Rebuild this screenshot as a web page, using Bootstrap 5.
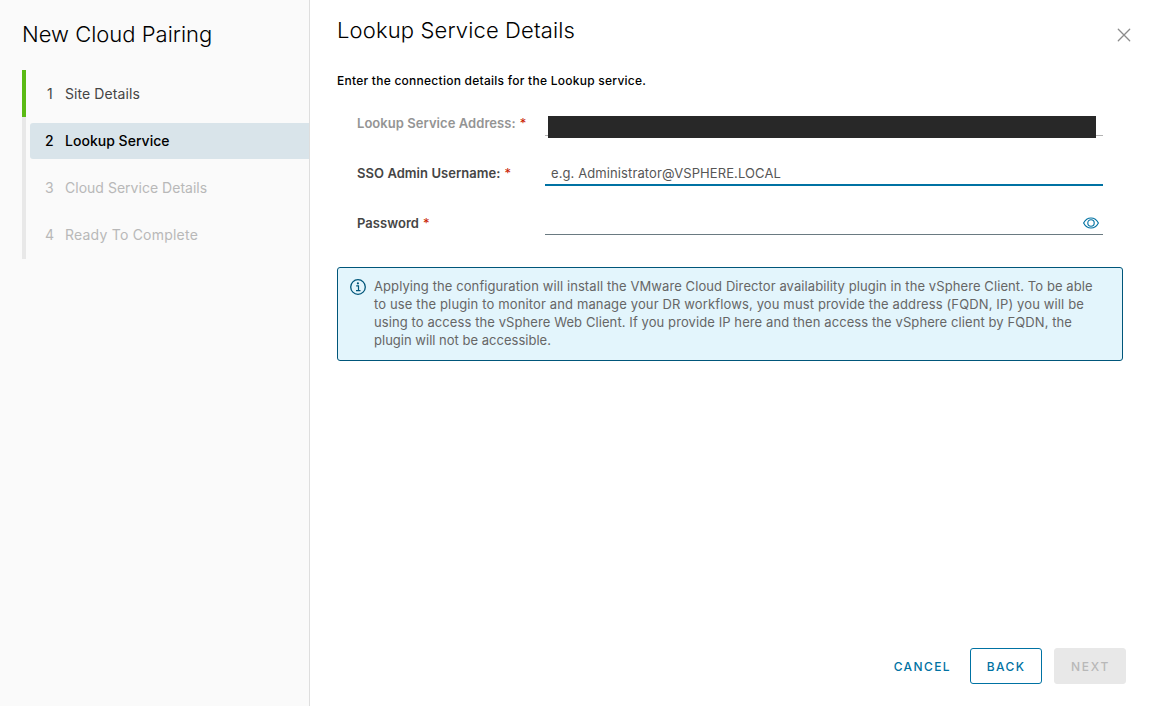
<!DOCTYPE html>
<html lang="en">
<head>
<meta charset="utf-8">
<meta name="viewport" content="width=device-width, initial-scale=1">
<title>New Cloud Pairing</title>
<link href="https://cdn.jsdelivr.net/npm/bootstrap@5.3.0/dist/css/bootstrap.min.css" rel="stylesheet">
<style>
body { font-family: Inter, "Open Sans", sans-serif; font-size: 13px; line-height: 18px; color: #000; overflow: hidden; }
h1, h2 { font-size: 22px; line-height: 28px; font-weight: 300; margin: 0; white-space: nowrap; }
h1 { letter-spacing: 0; }
h2 { letter-spacing: .14px; }
.side { width: 310px; background: #fafafa; border-right: 1px solid #dedede; padding: 20px 0 0 22px; }
.steps { margin-top: 22px; font-size: 14px; letter-spacing: .02px; }
.step { height: 47px; border-left: 4px solid #e8e8e8; padding-left: 4px; color: #b8b8b8; }
.step:last-child { height: 48px; padding-bottom: 1px; letter-spacing: .22px; }
.step.done { border-left-color: #5aba14; color: #454545; letter-spacing: .09px; }
.step-link { height: 36px; width: 100%; padding-left: 15px; border-radius: 3px 0 0 3px; }
.step.current .step-link { background: #d9e4ea; color: #000; font-weight: 500; }
.step-no { width: 20px; }
.step.done .step-no { padding-left: 2px; }
.main-pane { padding: 16px 23px 22px 27px; }
.close-x { margin: 12px -5px 0 0; width: 14px; height: 14px; }
.intro { margin: 28px 0 0; height: 17px; font-size: 12px; font-weight: 500; letter-spacing: .255px; }
.fields { margin-top: 20px; padding: 0 23px 0 20px; }
.field { height: 50px; }
.field-label { width: 188px; padding-top: 5px; font-weight: 600; color: #454545; white-space: nowrap; letter-spacing: .05px; }
.field-label.off { color: #949494; }
.req { color: #c92100; font-weight: 400; margin-left: 4px; }
.field-box { height: 27px; width: 558px; border-bottom: 1px solid #6a7a81; padding: 0 6px; }
.field-box.off { border-color: #b3b3b3; padding: 0 7px 0 3px; }
.field-box.focus { border-bottom: 2px solid #0072a3; }
.field-box.secret { height: 26px; padding: 2px 4px 0 6px; }
.redacted { background: #282828; height: 22px; margin-top: 7px; }
.field-box input { border: 0; outline: 0; padding: 0; background: transparent; font-size: 13px; letter-spacing: .1px; height: 18px; margin-top: 5px; width: 100%; }
.field-box input::placeholder { color: #565656; opacity: 1; }
.info { width: 786px; height: 94px; margin-top: 8px; background: #e3f5fc; border: 1px solid #00567a; border-radius: 3px; padding: 9px 12px; color: #666; }
.info svg { margin-top: 2px; }
.info p { margin: 0 0 0 8px; white-space: nowrap; letter-spacing: .09px; }
.wider { letter-spacing: .135px; }
.tighter { letter-spacing: .01px; }
.act { height: 36px; padding: 0; font-size: 12px; font-weight: 500; color: #0072a3; border: 1px solid transparent; border-radius: 3px; line-height: 35px; letter-spacing: 1.4px; }
.act-cancel { margin-right: 18px; }
.act-back { border-color: #0072a3; width: 72px; margin-right: 12px; }
.act-next, .act-next:disabled { background: #e8e8e8; color: #b8b8b8; opacity: 1; width: 72px; padding-left: 1px; letter-spacing: 1.7px; border-color: #e8e8e8; }
</style>
</head>
<body>
<div class="d-flex vh-100">
  <aside class="side flex-shrink-0">
    <h1>New Cloud Pairing</h1>
    <div class="steps">
      <div class="step done d-flex align-items-center"><div class="step-link d-flex align-items-center"><span class="step-no">1</span><span>Site Details</span></div></div>
      <div class="step current d-flex align-items-center"><div class="step-link d-flex align-items-center"><span class="step-no">2</span><span>Lookup Service</span></div></div>
      <div class="step d-flex align-items-center"><div class="step-link d-flex align-items-center"><span class="step-no">3</span><span>Cloud Service Details</span></div></div>
      <div class="step d-flex align-items-center"><div class="step-link d-flex align-items-center"><span class="step-no">4</span><span>Ready To Complete</span></div></div>
    </div>
  </aside>
  <main class="main-pane flex-grow-1 d-flex flex-column">
    <div class="d-flex justify-content-between align-items-start">
      <h2>Lookup Service Details</h2>
      <svg class="close-x" viewBox="0 0 14 14" fill="none" stroke="#8c8c8c" stroke-width="1.3" stroke-linecap="round"><path d="M1.3 1.3 12.7 12.7M12.7 1.3 1.3 12.7"/></svg>
    </div>
    <p class="intro">Enter the connection details for the Lookup service.</p>
    <div class="fields">
      <div class="field d-flex">
        <div class="field-label off">Lookup Service Address:<span class="req">*</span></div>
        <div class="field-box off"><div class="redacted"></div></div>
      </div>
      <div class="field d-flex">
        <label class="field-label" for="username">SSO Admin Username:<span class="req">*</span></label>
        <div class="field-box focus"><input id="username" type="text" placeholder="e.g. Administrator@VSPHERE.LOCAL"></div>
      </div>
      <div class="field d-flex">
        <div class="field-label">Password<span class="req">*</span></div>
        <div class="field-box secret d-flex align-items-center justify-content-end">
          <svg width="16" height="12" viewBox="0 0 16 12" fill="none" stroke="#0072a3" stroke-width="1.1"><path d="M.6 6C2.300 2.700 4.900 1 8 1s5.700 1.700 7.400 5C13.700 9.300 11.100 11 8 11S2.300 9.300.6 6Z"/><circle cx="8" cy="6" r="3.200"/></svg>
        </div>
      </div>
    </div>
    <div class="info d-flex align-items-start">
      <svg class="flex-shrink-0" width="16" height="16" viewBox="0 0 16 16"><circle cx="8" cy="8" r="7.300" fill="none" stroke="#00567a" stroke-width="1.300"/><circle cx="7.900" cy="4.300" r="1.100" fill="#00567a"/><path d="M6.200 6.900H8.500V11.600M6 11.700H10.500" fill="none" stroke="#00567a" stroke-width="1.200"/></svg>
      <p>Applying the configuration will install the VMware Cloud Director availability plugin in the vSphere Client. To be able<br><span class="wider">to use the plugin to monitor and manage your DR workflows, you must provide the address (FQDN, IP) you will be</span><br>using to access the vSphere Web Client. If you provide IP here and then access the vSphere client by FQDN, the<br><span class="tighter">plugin will not be accessible.</span></p>
    </div>
    <div class="mt-auto d-flex justify-content-end">
      <button class="btn act act-cancel">CANCEL</button>
      <button class="btn act act-back">BACK</button>
      <button class="btn act act-next" disabled>NEXT</button>
    </div>
  </main>
</div>
<script src="https://cdn.jsdelivr.net/npm/bootstrap@5.3.0/dist/js/bootstrap.bundle.min.js"></script>
</body>
</html>
